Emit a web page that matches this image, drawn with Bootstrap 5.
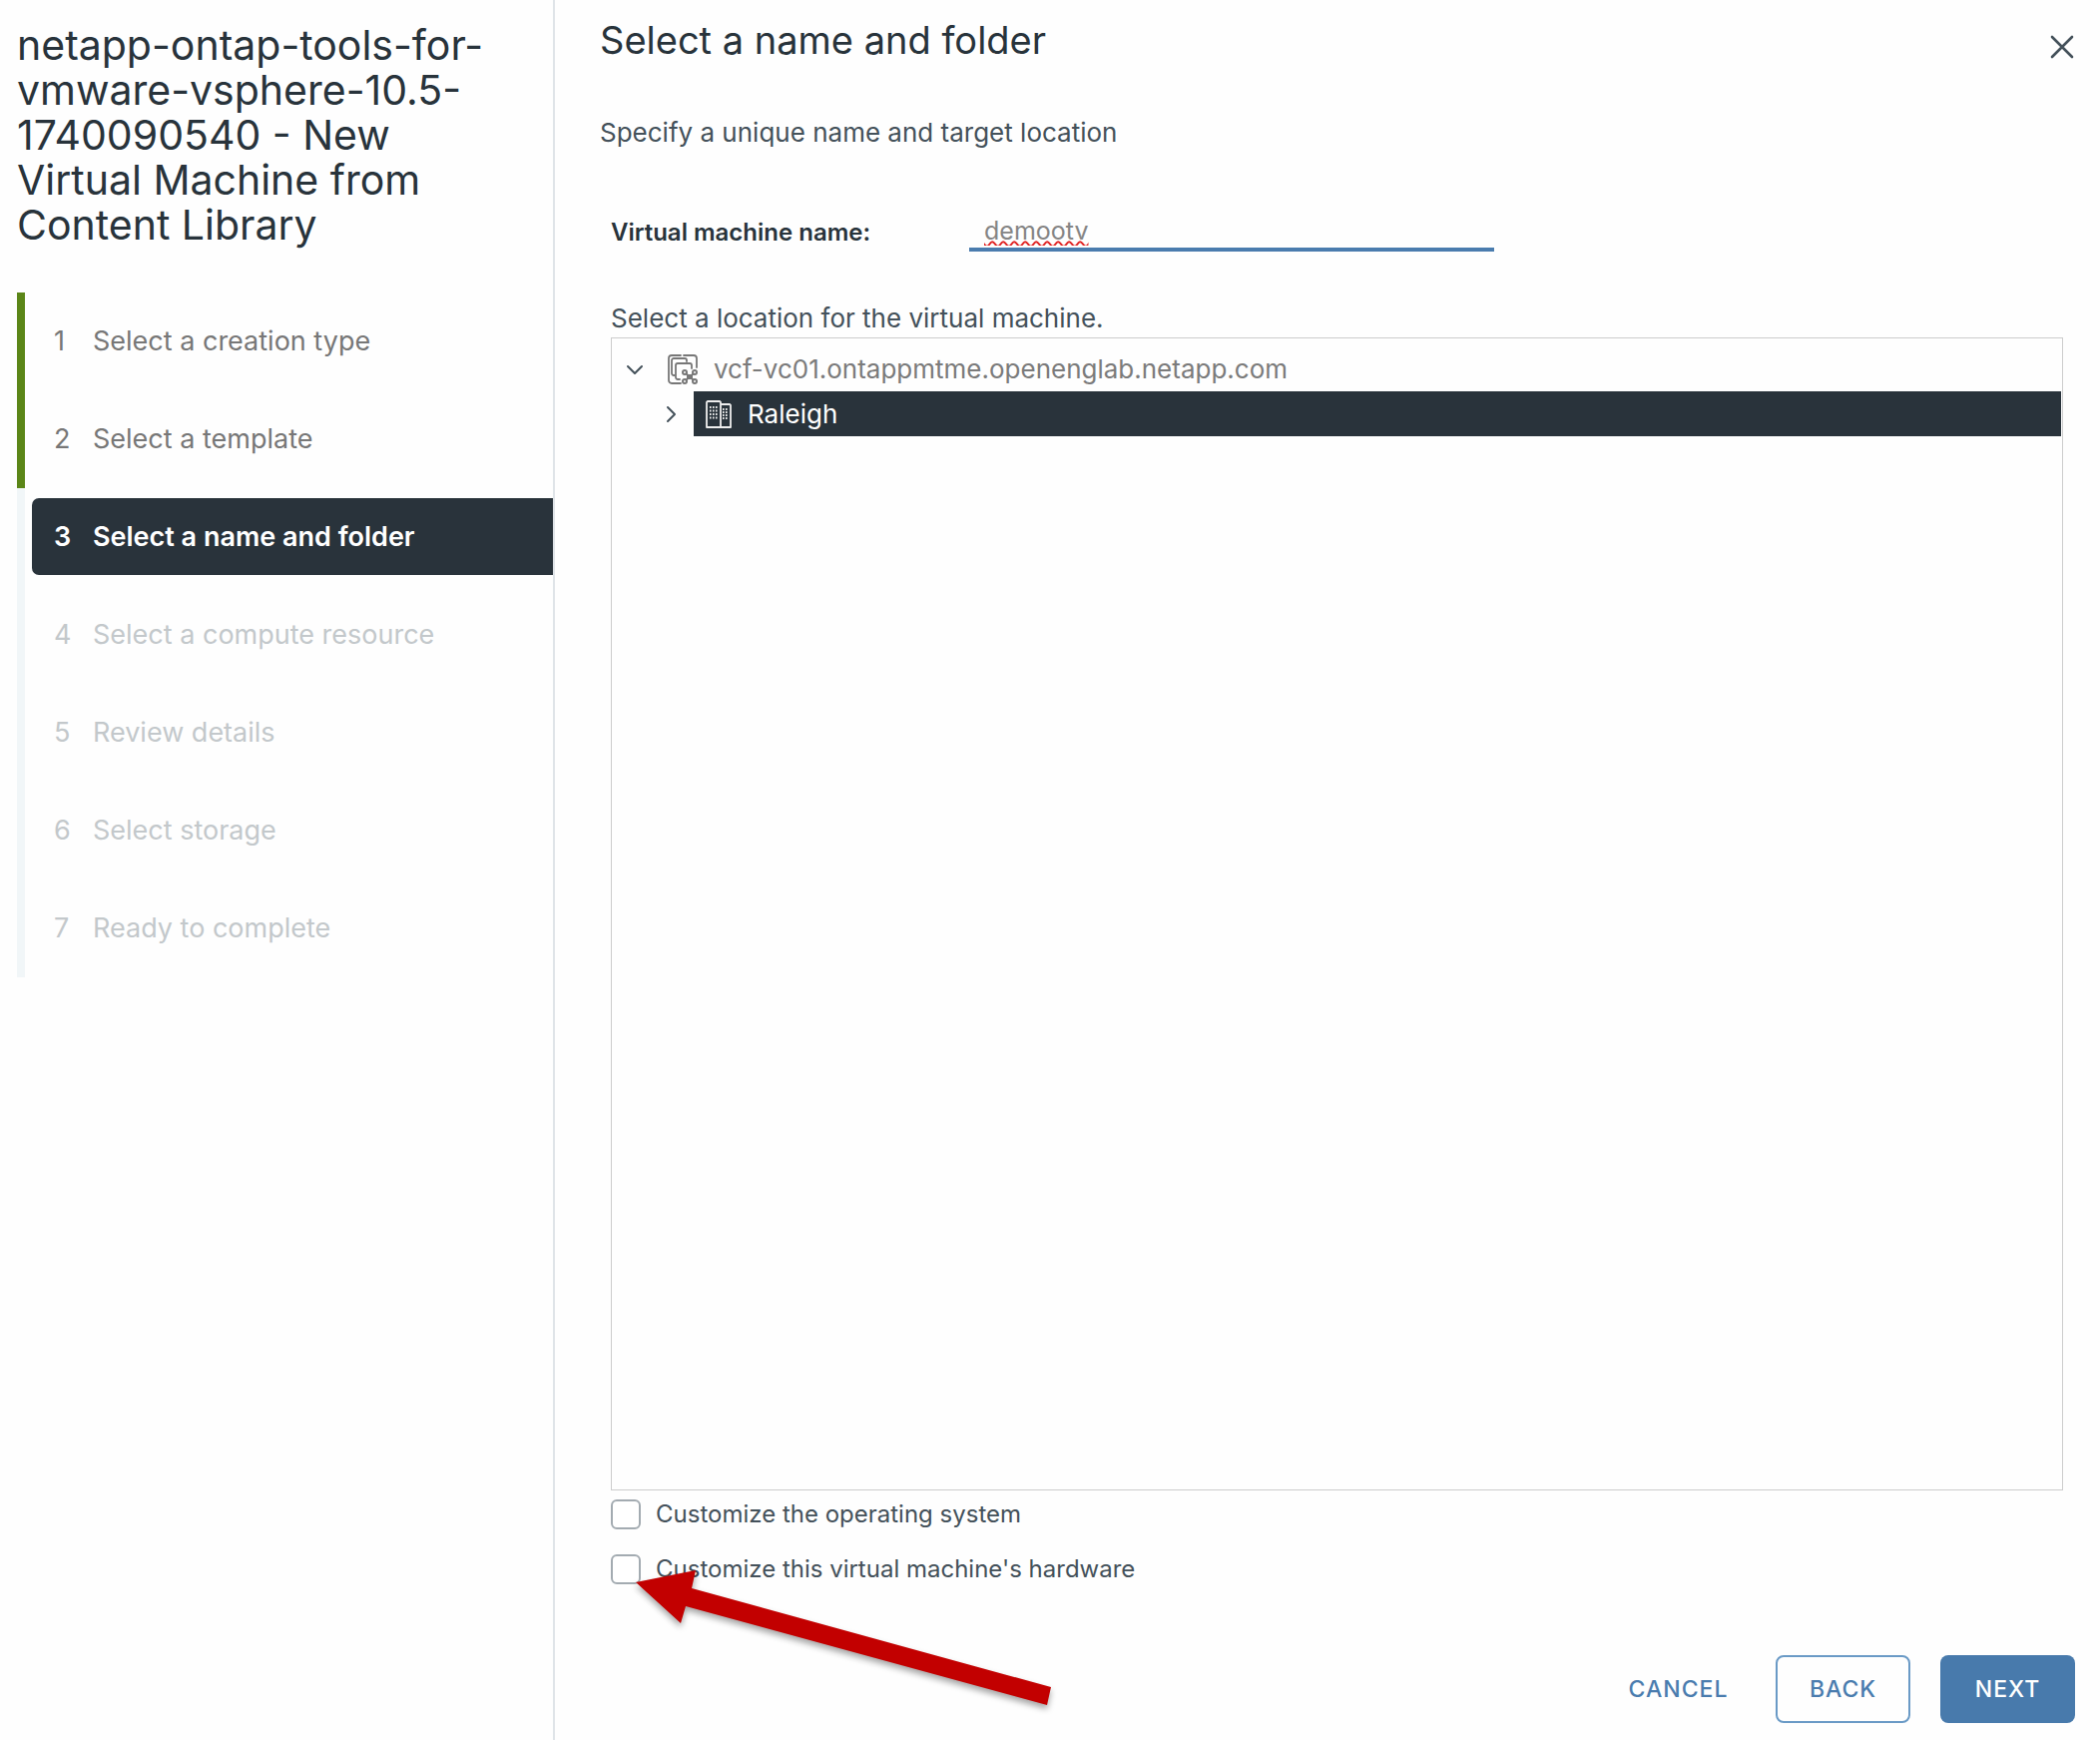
<!DOCTYPE html>
<html lang="en">
<head>
<meta charset="utf-8">
<meta name="viewport" content="width=device-width, initial-scale=1">
<title>New Virtual Machine from Content Library</title>
<link href="https://cdn.jsdelivr.net/npm/bootstrap@5.3.0/dist/css/bootstrap.min.css" rel="stylesheet">
<style>
  body { font-family: Inter, "Liberation Sans", sans-serif; font-size: 26px; line-height: 32px; color: #44515a; background: #fefefe; }
  .wizard-side { width: 556px; border-right: 2px solid #dfe4e8; padding: 23px 0 0 17px; }
  .wizard-title { font-size: 41px; line-height: 45px; font-weight: 400; color: #28333b; margin: 0 0 45px; }
  .step { height: 98px; border-left: 8px solid #f1f6f8; padding: 10px 0 11px 7px; font-size: 27px; }
  .step-done { border-left-color: #5b8618; }
  .step-link { height: 77px; padding-left: 22px; border-radius: 7px 0 0 7px; color: #777; text-decoration: none; }
  .step-link .step-no { width: 39px; }
  .step-wait .step-link { color: #c3c8cb; }
  .step-now .step-link { background: #29333b; color: #fff; font-weight: 600; }
  .wizard-main { padding: 16px 25px 17px 45px; }
  .page-title { font-size: 38px; line-height: 48px; font-weight: 400; color: #28333b; }
  .btn-x { margin: 14px -2px 0 0; width: 30px; height: 34px; }
  .intro { margin-top: 53px; }
  .form-area { padding: 0 12px 0 11px; }
  .name-row { margin-top: 65px; }
  .name-label { width: 359px; font-size: 24px; font-weight: 600; color: #28333b; }
  .name-box { width: 526px; height: 38px; border: 0; border-bottom: 4px solid #4a7cae; border-radius: 0; padding: 0 15px; font-size: 25px; line-height: 32px; color: #858585; background: transparent; text-decoration: underline wavy #e02020 2px; text-decoration-skip-ink: none; }
  .name-box:focus { box-shadow: none; color: #858585; background: transparent; border-color: #4a7cae; }
  .tree-caption { margin-top: 51px; }
  .tree { border: 1px solid #ccc; margin-top: 3px; padding: 8px 1px; }
  .tree-row { height: 45px; }
  .caret { width: 18px; height: 18px; padding: 0; border: 0; background: none; display: flex; }
  .tree-root { padding-left: 13px; color: #7b7b7b; }
  .tree-child { padding-left: 50px; }
  .tree-pick { background: #29333b; color: #fff; padding-left: 12px; margin-left: 13px; }
  .tick-list { gap: 7px; }
  .tick-row { height: 48px; font-size: 24px; }
  .tick-row .form-check-input { width: 30px; height: 30px; margin: 0 15px 0 0; border: 2px solid #a3abb1; border-radius: 6px; }
  .wizard-actions { gap: 30px; margin-top: 62px; }
  .act { height: 68px; min-width: 135px; padding: 0; border-radius: 8px; font-size: 23px; font-weight: 500; letter-spacing: 1px; }
  .act-text { color: #4a7cae; min-width: 135px; }
  .act-line { color: #4a7cae; border: 2px solid #6a9ac6; }
  .act-fill { color: #fff; background: #487aac; }
  .pointer { position: absolute; left: -3px; top: 60px; width: 450px; height: 160px; pointer-events: none; filter: drop-shadow(0 4px 3px rgba(0,0,0,.35)); }
</style>
</head>
<body>
<div class="d-flex min-vh-100">
  <aside class="wizard-side flex-shrink-0">
    <h1 class="wizard-title">netapp-ontap-tools-for-<br>vmware-vsphere-10.5-<br>1740090540 - New<br>Virtual Machine from<br>Content Library</h1>
    <ol class="list-unstyled m-0">
      <li class="step step-done"><a href="#" class="step-link d-flex align-items-center"><span class="step-no">1</span>Select a creation type</a></li>
      <li class="step step-done"><a href="#" class="step-link d-flex align-items-center"><span class="step-no">2</span>Select a template</a></li>
      <li class="step step-now"><a href="#" class="step-link d-flex align-items-center" aria-current="step"><span class="step-no">3</span>Select a name and folder</a></li>
      <li class="step step-wait"><a href="#" class="step-link d-flex align-items-center"><span class="step-no">4</span>Select a compute resource</a></li>
      <li class="step step-wait"><a href="#" class="step-link d-flex align-items-center"><span class="step-no">5</span>Review details</a></li>
      <li class="step step-wait"><a href="#" class="step-link d-flex align-items-center"><span class="step-no">6</span>Select storage</a></li>
      <li class="step step-wait"><a href="#" class="step-link d-flex align-items-center"><span class="step-no">7</span>Ready to complete</a></li>
    </ol>
  </aside>

  <main class="wizard-main flex-grow-1 d-flex flex-column">
    <header class="d-flex justify-content-between align-items-start">
      <h2 class="page-title m-0">Select a name and folder</h2>
      <button type="button" class="btn btn-x p-0 border-0 d-flex align-items-center justify-content-center" aria-label="Close">
        <svg width="24" height="24" viewBox="0 0 24 24" fill="none" stroke="#44515a" stroke-width="2.6" stroke-linecap="round"><path d="M2 2 22 22M22 2 2 22"/></svg>
      </button>
    </header>
    <p class="intro mb-0">Specify a unique name and target location</p>

    <form class="form-area flex-grow-1 d-flex flex-column">
      <div class="name-row d-flex align-items-center">
        <label class="name-label" for="vm-name">Virtual machine name:</label>
        <input class="form-control name-box" id="vm-name" type="text" value="demootv" spellcheck="false">
      </div>
      <p class="tree-caption mb-0">Select a location for the virtual machine.</p>
      <div class="tree flex-grow-1" role="tree">
        <div class="tree-row tree-root d-flex align-items-center" role="treeitem" aria-expanded="true">
          <button type="button" class="caret" aria-label="Collapse"><svg width="18" height="18" viewBox="0 0 18 18" fill="none" stroke="#44515a" stroke-width="2" stroke-linecap="round" stroke-linejoin="round"><path d="M2 6l7 7 7-7"/></svg></button>
          <svg class="ms-4 me-3" width="30" height="30" viewBox="0 0 30 30" fill="none" stroke="#777" stroke-width="1.8" stroke-linecap="round" stroke-linejoin="round">
            <path d="M13 29H4a3 3 0 0 1-3-3V4a3 3 0 0 1 3-3h9M16 1h10a3 3 0 0 1 3 3v9"/>
            <path d="M7 21H6a2 2 0 0 1-2-2V6a2 2 0 0 1 2-2h11a2 2 0 0 1 2 2v1"/>
            <path d="M12 25h-2a2 2 0 0 1-2-2V11a2 2 0 0 1 2-2h12a2 2 0 0 1 2 2v3"/>
            <g stroke-width="2"><circle cx="17" cy="18" r="2"/><circle cx="27" cy="18" r="2"/><circle cx="17" cy="27" r="2"/><circle cx="27" cy="27" r="2"/>
            <path d="M18.500 19.500l7 6M25.500 19.500l-7 6"/><path d="M20 21h4v3h-4z"/></g>
          </svg>
          <span>vcf-vc01.ontappmtme.openenglab.netapp.com</span>
        </div>
        <div class="tree-row tree-child d-flex align-items-center" role="treeitem" aria-expanded="false" aria-selected="true">
          <button type="button" class="caret" aria-label="Expand"><svg width="18" height="18" viewBox="0 0 18 18" fill="none" stroke="#44515a" stroke-width="2" stroke-linecap="round" stroke-linejoin="round"><path d="M5 2l7 7-7 7"/></svg></button>
          <div class="tree-pick flex-grow-1 h-100 d-flex align-items-center">
            <svg class="me-3" width="26" height="28" viewBox="0 0 26 28" fill="none" stroke="#eee" stroke-width="1.8" stroke-linejoin="round">
              <path d="M1 27V2l1-1h12l1 1v25zM15 4h9l1 1v22H15z"/>
              <path d="M4 7h9M4 10.500h9M4 14h9M4 17.500h9M17 9h6M17 12h6M17 15h6M17 18h6" stroke-dasharray="1.600 1.400"/>
            </svg>
            <span>Raleigh</span>
          </div>
        </div>
      </div>
      <div class="tick-list position-relative d-flex flex-column">
        <div class="tick-row d-flex align-items-center">
          <input class="form-check-input" type="checkbox" id="opt-os"><label for="opt-os">Customize the operating system</label>
        </div>
        <div class="tick-row d-flex align-items-center">
          <input class="form-check-input" type="checkbox" id="opt-hw"><label for="opt-hw">Customize this virtual machine's hardware</label>
        </div>
        <svg class="pointer" viewBox="0 0 450 160" aria-hidden="true"><path fill="#c20000" d="M28 32 88 20 84 38 444 137 440 155 78 56 73 73Z"/></svg>
      </div>
    </form>

    <footer class="wizard-actions d-flex justify-content-end">
      <button type="button" class="btn act act-text">CANCEL</button>
      <button type="button" class="btn act act-line">BACK</button>
      <button type="button" class="btn act act-fill">NEXT</button>
    </footer>
  </main>
</div>
<script src="https://cdn.jsdelivr.net/npm/bootstrap@5.3.0/dist/js/bootstrap.bundle.min.js"></script>
</body>
</html>
